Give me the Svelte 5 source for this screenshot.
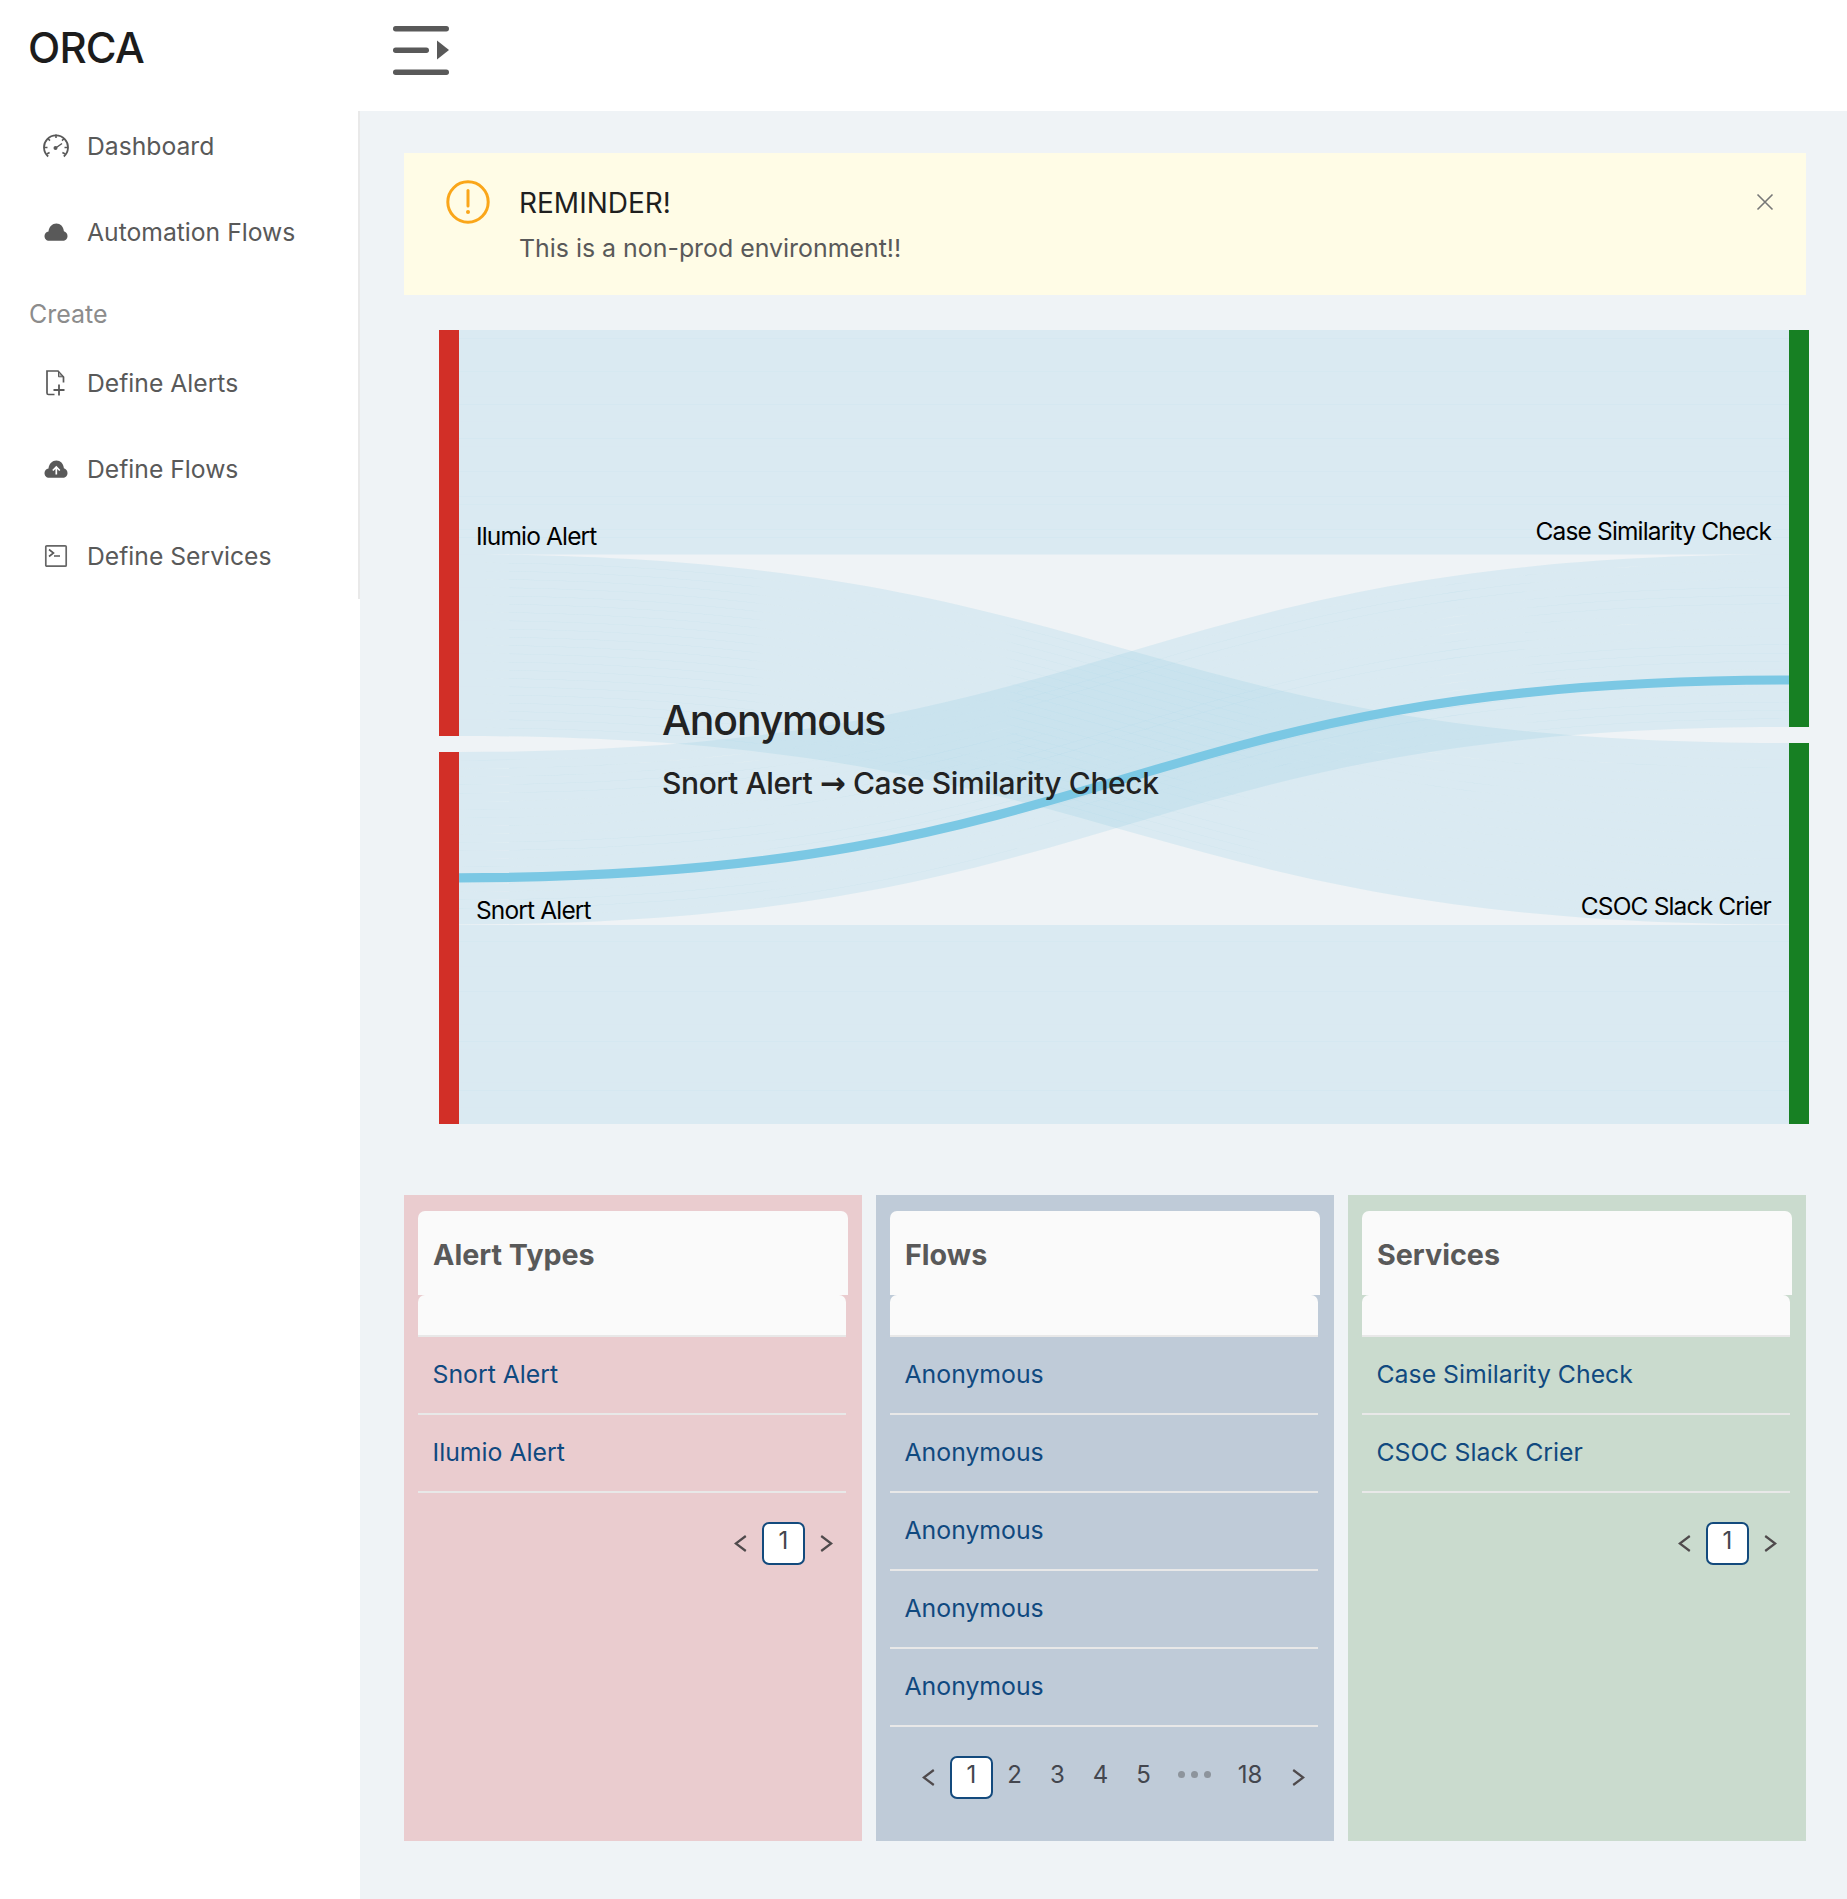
<script>
  const mainNav = [
    { label: 'Dashboard', icon: 'gauge' },
    { label: 'Automation Flows', icon: 'cloud' }
  ];
  const createNav = [
    { label: 'Define Alerts', icon: 'file' },
    { label: 'Define Flows', icon: 'upload' },
    { label: 'Define Services', icon: 'code' }
  ];

  const cards = [
    { title: 'Alert Types', tone: 'pink', items: ['Snort Alert', 'Ilumio Alert'], pages: ['1'] },
    { title: 'Flows', tone: 'blue', items: ['Anonymous', 'Anonymous', 'Anonymous', 'Anonymous', 'Anonymous'], pages: ['1', '2', '3', '4', '5', '...', '18'] },
    { title: 'Services', tone: 'green', items: ['Case Similarity Check', 'CSOC Slack Crier'], pages: ['1'] }
  ];

  // sankey coordinates are relative to the svg box
  const X0 = 55;
  const X1 = 1385;
  const XM = (X0 + X1) / 2;

  function ribbon(y0, y1, h) {
    return `M${X0},${y0}C${XM},${y0} ${XM},${y1} ${X1},${y1}L${X1},${y1 + h}C${XM},${y1 + h} ${XM},${y0 + h} ${X0},${y0 + h}Z`;
  }

  function strands(y0, y1, h) {
    const n = Math.round(h / 8.3);
    const step = h / n;
    // a hair of overlap leaves the faint mesh lines between strands
    return Array.from({ length: n }, (_, i) => ribbon(y0 + i * step, y1 + i * step, i === n - 1 ? step : step + 0.08));
  }

  const links = [
    ...strands(0, 0, 224.5),
    ...strands(224.5, 413, 181.5),
    ...strands(422, 224.5, 172.5),
    ...strands(595, 595, 199)
  ];
  const active = `M${X0},547.8C${XM},547.8 ${XM},350 ${X1},350`;
</script>

<div class="page">
  <aside class="sidebar">
    <div class="brand">ORCA</div>
    <nav>
      {#each mainNav as item}
        {@render navItem(item)}
      {/each}
      <div class="group">Create</div>
      {#each createNav as item}
        {@render navItem(item)}
      {/each}
    </nav>
  </aside>

  <div class="content">
    <header>
      <svg class="toggle" width="56" height="49" viewBox="0 0 56 49" aria-label="Toggle menu">
        <rect x="0" y="0" width="56" height="5.5" rx="2.7" />
        <rect x="0" y="21.5" width="36" height="5.5" rx="2.7" />
        <rect x="0" y="43.5" width="56" height="5.5" rx="2.7" />
        <path d="M44 14.5 L56 24 L44 33.5 Z" />
      </svg>
    </header>

    <main>
      <div class="alert">
        <svg class="alert-icon" width="44" height="44" viewBox="0 0 44 44">
          <circle cx="22" cy="22" r="20.2" fill="none" stroke="#faa61a" stroke-width="3" />
          <path d="M22 10.5 V26" stroke="#faa61a" stroke-width="3" stroke-linecap="round" />
          <circle cx="22" cy="32" r="2" fill="#faa61a" />
        </svg>
        <div class="alert-body">
          <div class="alert-title">REMINDER!</div>
          <div class="alert-text">This is a non-prod environment!!</div>
        </div>
        <button class="close" aria-label="Close">
          <svg width="18" height="18" viewBox="0 0 18 18">
            <path d="M1.5 1.5 L16.5 16.5 M16.5 1.5 L1.5 16.5" stroke="#777" stroke-width="1.6" fill="none" />
          </svg>
        </button>
      </div>

      <div class="sankey">
        <svg width="1402" height="794" viewBox="0 0 1402 794">
          {#each links as d}
            <path {d} fill="#8ecde4" fill-opacity="0.21" />
          {/each}
          <path d={active} fill="none" stroke="#7bc8e4" stroke-width="9.2" />
          <rect x="35" y="0" width="20" height="406" fill="#d22f27" />
          <rect x="35" y="422" width="20" height="372" fill="#d22f27" />
          <rect x="1385" y="0" width="20" height="397" fill="#178023" />
          <rect x="1385" y="413" width="20" height="381" fill="#178023" />
          <text x="72" y="215">Ilumio Alert</text>
          <text x="72" y="589">Snort Alert</text>
          <text x="1367" y="210" text-anchor="end">Case Similarity Check</text>
          <text x="1367" y="585" text-anchor="end">CSOC Slack Crier</text>
        </svg>
        <div class="tip">
          <div class="tip-title">Anonymous</div>
          <div class="tip-path">Snort Alert <span class="tip-arrow">→</span> Case Similarity Check</div>
        </div>
      </div>

      <div class="cards">
        {#each cards as card}
          <section class="card {card.tone}">
            <div class="card-head"><h2>{card.title}</h2></div>
            <div class="card-sub"></div>
            <ul>
              {#each card.items as item}
                <li><a href="#top">{item}</a></li>
              {/each}
            </ul>
            <div class="pager">
              <span class="arrow">
                <svg width="13" height="17" viewBox="0 0 13 17"><path d="M11.8 1 L1.8 8.5 L11.8 16" /></svg>
              </span>
              {#each card.pages as p, i}
                {#if p === '...'}
                  <span class="dots"><i></i><i></i><i></i></span>
                {:else if p === '18'}
                  <span class="num wide">{p}</span>
                {:else}
                  <span class="num" class:current={i === 0}>{p}</span>
                {/if}
              {/each}
              <span class="arrow">
                <svg width="13" height="17" viewBox="0 0 13 17"><path d="M1.2 1 L11.2 8.5 L1.2 16" /></svg>
              </span>
            </div>
          </section>
        {/each}
      </div>
    </main>
  </div>
</div>

{#snippet navItem(item)}
  <a class="nav-item" href="#top">
    <span class="nav-icon">
      {#if item.icon === 'gauge'}
        <svg width="26" height="26" viewBox="0 0 26 26" fill="none" stroke="#595959" stroke-width="1.8">
          <path d="M5.2 23.5 A12 12 0 1 1 20.8 23.5" />
          <path d="M13 1.5 V5 M4.8 5.5 L7 7.6 M21.2 5.5 L19 7.6 M1 14.5 H4.5 M25 14.5 H21.5 M3.8 21 L6.6 19.5 M22.2 21 L19.4 19.5" stroke-width="1.6" />
          <path d="M12 15.5 L19 10.5" stroke-width="1.5" />
          <circle cx="12.5" cy="15" r="2" fill="#595959" stroke="none" />
        </svg>
      {:else if item.icon === 'cloud'}
        <svg width="24" height="18" viewBox="0 0 24 18">
          <path fill="#595959" d="M5.2 17.8 C2.2 17.8 .5 15.6 .5 13 C.5 10.6 2.2 8.8 4.5 8.4 C5 3.8 8.4 .6 12.4 .6 C16.4 .6 19.4 3.6 19.9 8.3 C22 8.9 23.5 10.7 23.5 13 C23.5 15.7 21.5 17.8 18.8 17.8 Z" />
        </svg>
      {:else if item.icon === 'file'}
        <svg width="20" height="26" viewBox="0 0 20 26" fill="none" stroke="#595959" stroke-width="1.7">
          <path d="M8.5 24.5 H2.5 Q1 24.5 1 23 V1 H12 L17.5 7 V12.5" />
          <path d="M12.5 1.5 L17 6.8 H12.5 Z" fill="#b0b0b0" stroke-width="1" />
          <path d="M7.5 20 H18.5 M13 14.5 V25.5" stroke-width="1.8" />
        </svg>
      {:else if item.icon === 'upload'}
        <svg width="24" height="18" viewBox="0 0 24 18">
          <path fill="#595959" d="M5.2 17.8 C2.2 17.8 .5 15.6 .5 13 C.5 10.6 2.2 8.8 4.5 8.4 C5 3.8 8.4 .6 12.4 .6 C16.4 .6 19.4 3.6 19.9 8.3 C22 8.9 23.5 10.7 23.5 13 C23.5 15.7 21.5 17.8 18.8 17.8 Z" />
          <path fill="none" stroke="#fff" stroke-width="1.7" d="M12.3 14.5 V7.5 M8.8 10.5 L12.3 7 L15.8 10.5" />
        </svg>
      {:else}
        <svg width="24" height="24" viewBox="0 0 24 24" fill="none" stroke="#666" stroke-width="1.7">
          <rect x="1.8" y="1.8" width="20.4" height="20.4" rx="1" />
          <path d="M5 5.5 L9.5 9 L5 12.5" stroke="#595959" stroke-width="1.6" />
          <path d="M10 12 H16" stroke="#595959" stroke-width="1.5" />
        </svg>
      {/if}
    </span>
    {item.label}
  </a>
{/snippet}

<style>
  :global(body) {
    margin: 0;
    background: #fff;
  }

  .page {
    display: grid;
    grid-template-columns: 360px 1fr;
    min-height: 1899px;
    font-family: Inter, 'Noto Sans', sans-serif;
    color: rgba(0, 0, 0, 0.65);
  }

  .sidebar {
    background: #fff;
  }

  .brand {
    height: 99px;
    padding: 0 0 0 28px;
    font-size: 42px;
    font-weight: 500;
    letter-spacing: -0.8px;
    line-height: 95px;
    color: #1c1c1c;
  }

  nav {
    margin-top: 12px;
    padding-bottom: 9px;
    height: 479px;
    border-right: 2px solid #e9e9e9;
  }

  .nav-item {
    display: flex;
    align-items: center;
    height: 69px;
    margin-bottom: 17.5px;
    font-size: 24.7px;
    color: #595959;
    text-decoration: none;
  }

  .nav-icon {
    display: flex;
    justify-content: center;
    align-items: center;
    width: 30px;
    margin: 0 16px 0 41px;
  }

  .group {
    height: 40px;
    line-height: 40px;
    margin: 27.5px 0 14px 29px;
    font-size: 25px;
    color: #8c8c8c;
  }

  header {
    height: 111px;
    background: #fff;
    padding: 26px 0 0 33px;
    box-sizing: border-box;
  }

  .toggle {
    display: block;
    fill: #595959;
  }

  main {
    background: #eff3f6;
    padding: 42px 41px 58px 44px;
    min-height: 1788px;
    box-sizing: border-box;
  }

  .alert {
    display: flex;
    height: 142px;
    box-sizing: border-box;
    padding: 27px 32px 0 42px;
    background: #fffce6;
  }

  .alert-icon {
    flex: none;
    margin-right: 29px;
  }

  .alert-body {
    flex: 1;
  }

  .alert-title {
    padding-top: 1px;
    font-size: 28px;
    line-height: 44px;
    color: #1f1f1f;
  }

  .alert-text {
    margin-top: 1px;
    font-size: 24.9px;
    line-height: 44px;
    color: #595959;
  }

  .close {
    align-self: flex-start;
    margin-top: 13px;
    padding: 0;
    border: 0;
    background: none;
    display: flex;
  }

  .sankey {
    position: relative;
    height: 794px;
    margin: 35px 0 71px;
  }

  .sankey svg {
    display: block;
    overflow: visible;
  }

  .sankey text {
    font-family: Inter, sans-serif;
    font-size: 24.5px;
    letter-spacing: -0.85px;
    fill: #000;
  }

  .tip {
    position: absolute;
    left: 258px;
    top: 360px;
    color: #222;
  }

  .tip-title {
    font-size: 41px;
    font-weight: 500;
    letter-spacing: -1.2px;
    line-height: 60px;
  }

  .tip-path {
    margin-top: 13px;
    font-size: 30px;
    font-weight: 500;
    letter-spacing: -0.4px;
    line-height: 40px;
    white-space: nowrap;
  }

  .tip-arrow {
    font-family: 'DejaVu Sans', sans-serif;
    font-size: 31px;
    font-weight: 700;
    line-height: 0;
  }

  .cards {
    display: grid;
    grid-template-columns: repeat(3, 458px);
    gap: 14px;
    height: 646px;
  }

  .card {
    padding: 16px 14px 0;
    box-sizing: border-box;
  }

  .pink { background: #eacccf; }
  .blue { background: #bfcbd8; }
  .green { background: #cadbce; }

  .card-head {
    height: 84px;
    padding: 0 15px;
    background: #fafafa;
    border-radius: 7px 7px 0 0;
  }

  h2 {
    margin: 0;
    font-size: 28.7px;
    font-weight: 700;
    line-height: 88px;
    color: #595959;
  }

  .card-sub {
    height: 40px;
    margin-right: 2px;
    background: #fafafa;
    border-radius: 7px 7px 0 0;
    border-bottom: 2px solid #e8e8e8;
  }

  ul {
    list-style: none;
    margin: 0 2px 0 0;
    padding: 0;
  }

  li {
    height: 76px;
    line-height: 74px;
    padding-left: 14.5px;
    border-bottom: 2px solid #e8e8e8;
    font-size: 24.8px;
  }

  li a {
    color: #10497f;
    text-decoration: none;
  }

  .pager {
    display: flex;
    justify-content: flex-end;
    align-items: center;
    margin-top: 29px;
    font-size: 24px;
  }

  .arrow, .num, .dots {
    display: flex;
    justify-content: center;
    align-items: center;
    width: 43px;
    height: 43px;
    box-sizing: border-box;
  }

  .arrow svg {
    fill: none;
    stroke: #4f4a4c;
    stroke-width: 2.2;
  }

  .num {
    padding-bottom: 6px;
    color: #43464e;
  }

  .num.current {
    background: #fff;
    border: 2px solid #134a7d;
    border-radius: 7px;
  }

  .num.wide {
    width: 54px;
  }

  .dots {
    width: 58px;
    gap: 6px;
    padding-bottom: 6px;
  }

  .dots i {
    width: 7px;
    height: 7px;
    border-radius: 50%;
    background: #8d949c;
  }
</style>
